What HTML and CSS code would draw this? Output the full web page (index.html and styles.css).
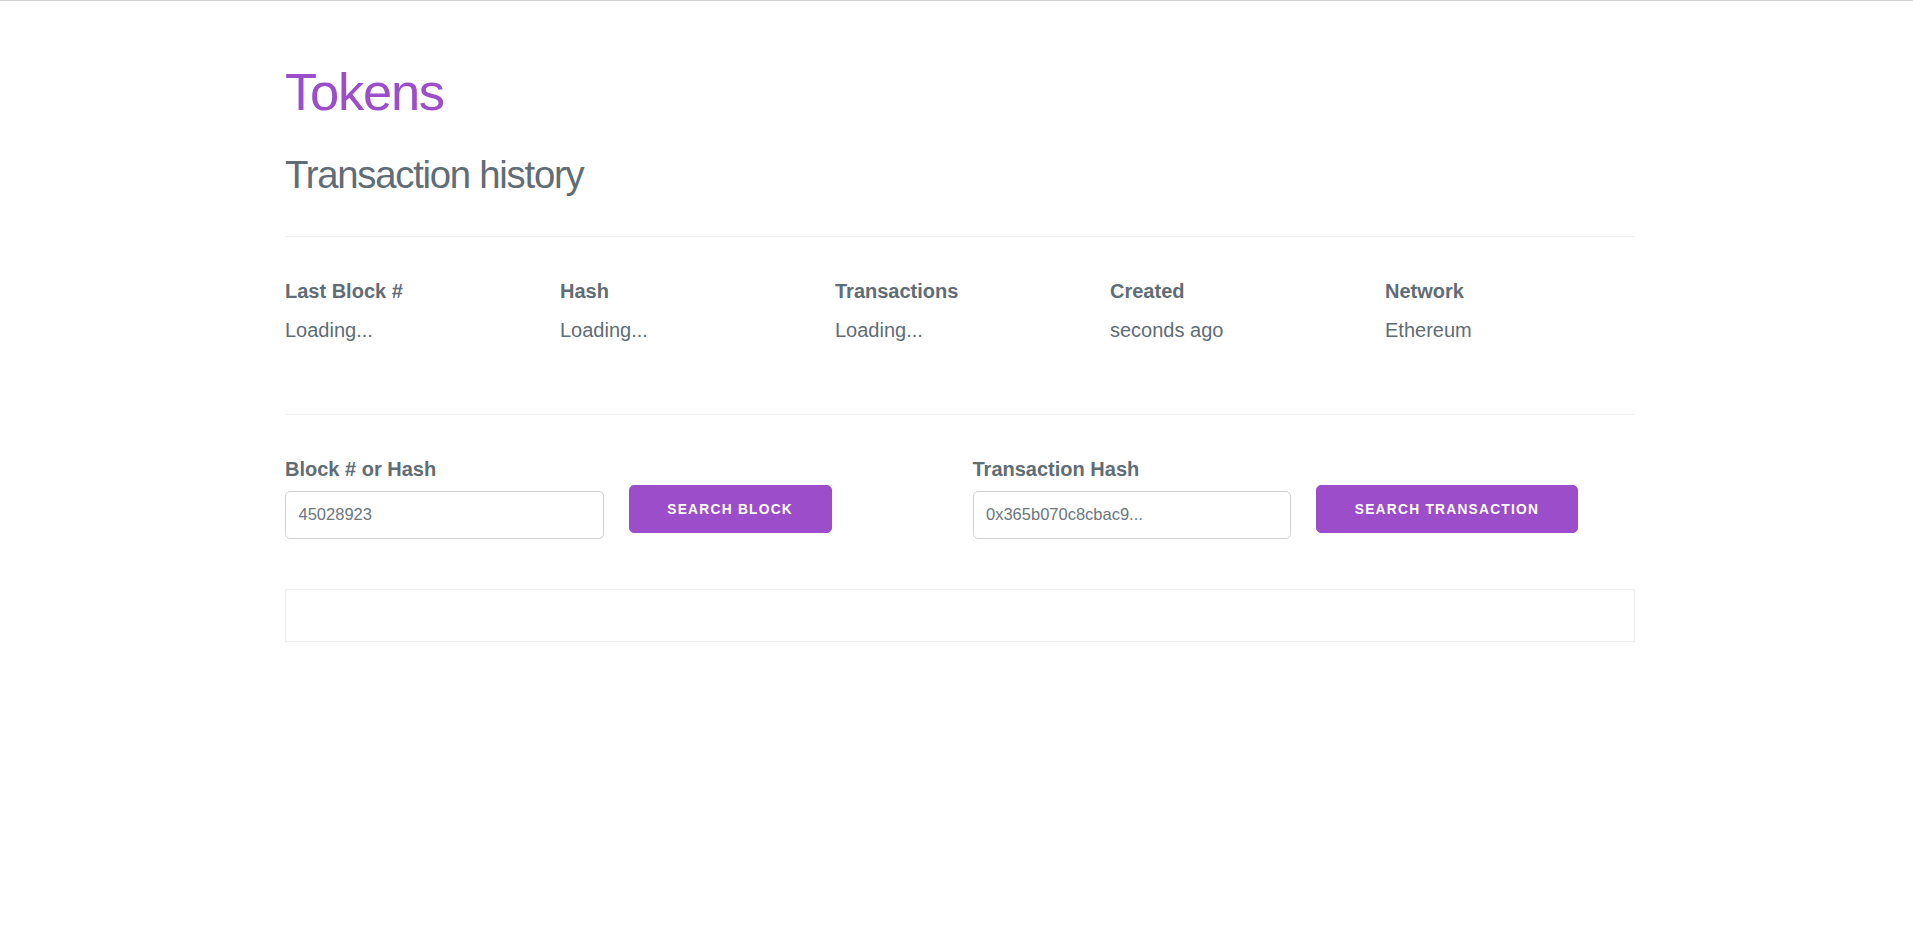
FILE: index.html
```html
<!DOCTYPE html>
<html lang="en">
<head>
<meta charset="utf-8">
<title>Tokens - Transaction history</title>
<link rel="stylesheet" href="styles.css">
</head>
<body>
<div class="page">
  <main class="container">
    <h1 class="title">Tokens</h1>
    <h2 class="subtitle">Transaction history</h2>
    <hr class="divider">
    <section class="stats">
      <div class="stat">
        <div class="stat-label">Last Block #</div>
        <p class="stat-value">Loading...</p>
      </div>
      <div class="stat">
        <div class="stat-label">Hash</div>
        <p class="stat-value">Loading...</p>
      </div>
      <div class="stat">
        <div class="stat-label">Transactions</div>
        <p class="stat-value">Loading...</p>
      </div>
      <div class="stat">
        <div class="stat-label">Created</div>
        <p class="stat-value">seconds ago</p>
      </div>
      <div class="stat">
        <div class="stat-label">Network</div>
        <p class="stat-value">Ethereum</p>
      </div>
    </section>
    <hr class="divider">
    <section class="search">
      <form class="search-half">
        <div class="search-field">
          <label class="field-label" for="block">Block # or Hash</label>
          <input class="field-input" id="block" type="text" value="45028923">
        </div>
        <div class="search-action">
          <button class="btn" type="button">Search Block</button>
        </div>
      </form>
      <form class="search-half">
        <div class="search-field">
          <label class="field-label" for="tx">Transaction Hash</label>
          <input class="field-input" id="tx" type="text" value="0x365b070c8cbac9...">
        </div>
        <div class="search-action">
          <button class="btn" type="button">Search Transaction</button>
        </div>
      </form>
    </section>
    <div class="results"></div>
  </main>
</div>
</body>
</html>
```
FILE: styles.css
```css
* { box-sizing: border-box; }

html, body {
  margin: 0;
  padding: 0;
  background: #ffffff;
}

body {
  border-top: 1px solid #d3d3d3;
  font-family: "Liberation Sans", Arial, Helvetica, sans-serif;
  color: #606c76;
  font-size: 20px;
  line-height: 32px;
}

.page {
  padding-left: 7px;
}

.container {
  width: 1350px;
  margin: 0 auto;
  padding-top: 61px;
  padding-bottom: 60px;
}

.title {
  margin: 0 0 29px;
  font-size: 52.5px;
  line-height: 60px;
  font-weight: 400;
  letter-spacing: -1.25px;
  color: #9b4dca;
}

.subtitle {
  margin: 0;
  font-size: 38.3px;
  line-height: 47px;
  font-weight: 400;
  letter-spacing: -1.25px;
  color: #606c76;
}

.divider {
  border: 0;
  border-top: 1px solid #f0f1f2;
  margin: 38px 0;
  height: 0;
}

.stats {
  display: flex;
  margin: 0 -12.5px;
}

.stat {
  flex: 1 1 0;
  padding: 0 12.5px;
}

.stat-label {
  font-weight: 700;
  margin-bottom: 7px;
}

.stat-value {
  margin: 0 0 30px;
}

.search {
  display: flex;
  margin: 0 -12.5px;
}

.search-half {
  flex: 1 1 0;
  display: flex;
  margin: 0;
}

.search-field,
.search-action {
  flex: 1 1 0;
  padding: 0 12.5px;
}

.search-action {
  padding-top: 32px;
}

.field-label {
  display: block;
  font-weight: 700;
  margin-bottom: 6px;
}

.field-input {
  display: block;
  width: 100%;
  height: 47.5px;
  padding: 7.5px 12.5px;
  border: 1px solid #d1d1d1;
  border-radius: 5px;
  background: #fff;
  font-family: "Liberation Sans", Arial, Helvetica, sans-serif;
  font-size: 16.5px;
  color: #6b7680;
  outline: none;
}

.btn {
  display: inline-block;
  height: 47.5px;
  padding: 0 37.5px;
  border: 1px solid #9b4dca;
  border-radius: 5px;
  background: #9b4dca;
  color: #ffffff;
  font-family: "Liberation Sans", Arial, Helvetica, sans-serif;
  font-size: 13.75px;
  font-weight: 700;
  letter-spacing: 1.25px;
  line-height: 47px;
  text-transform: uppercase;
  cursor: pointer;
}

.results {
  margin-top: 50px;
  height: 53px;
  border: 1px solid #eeeeee;
}
```
